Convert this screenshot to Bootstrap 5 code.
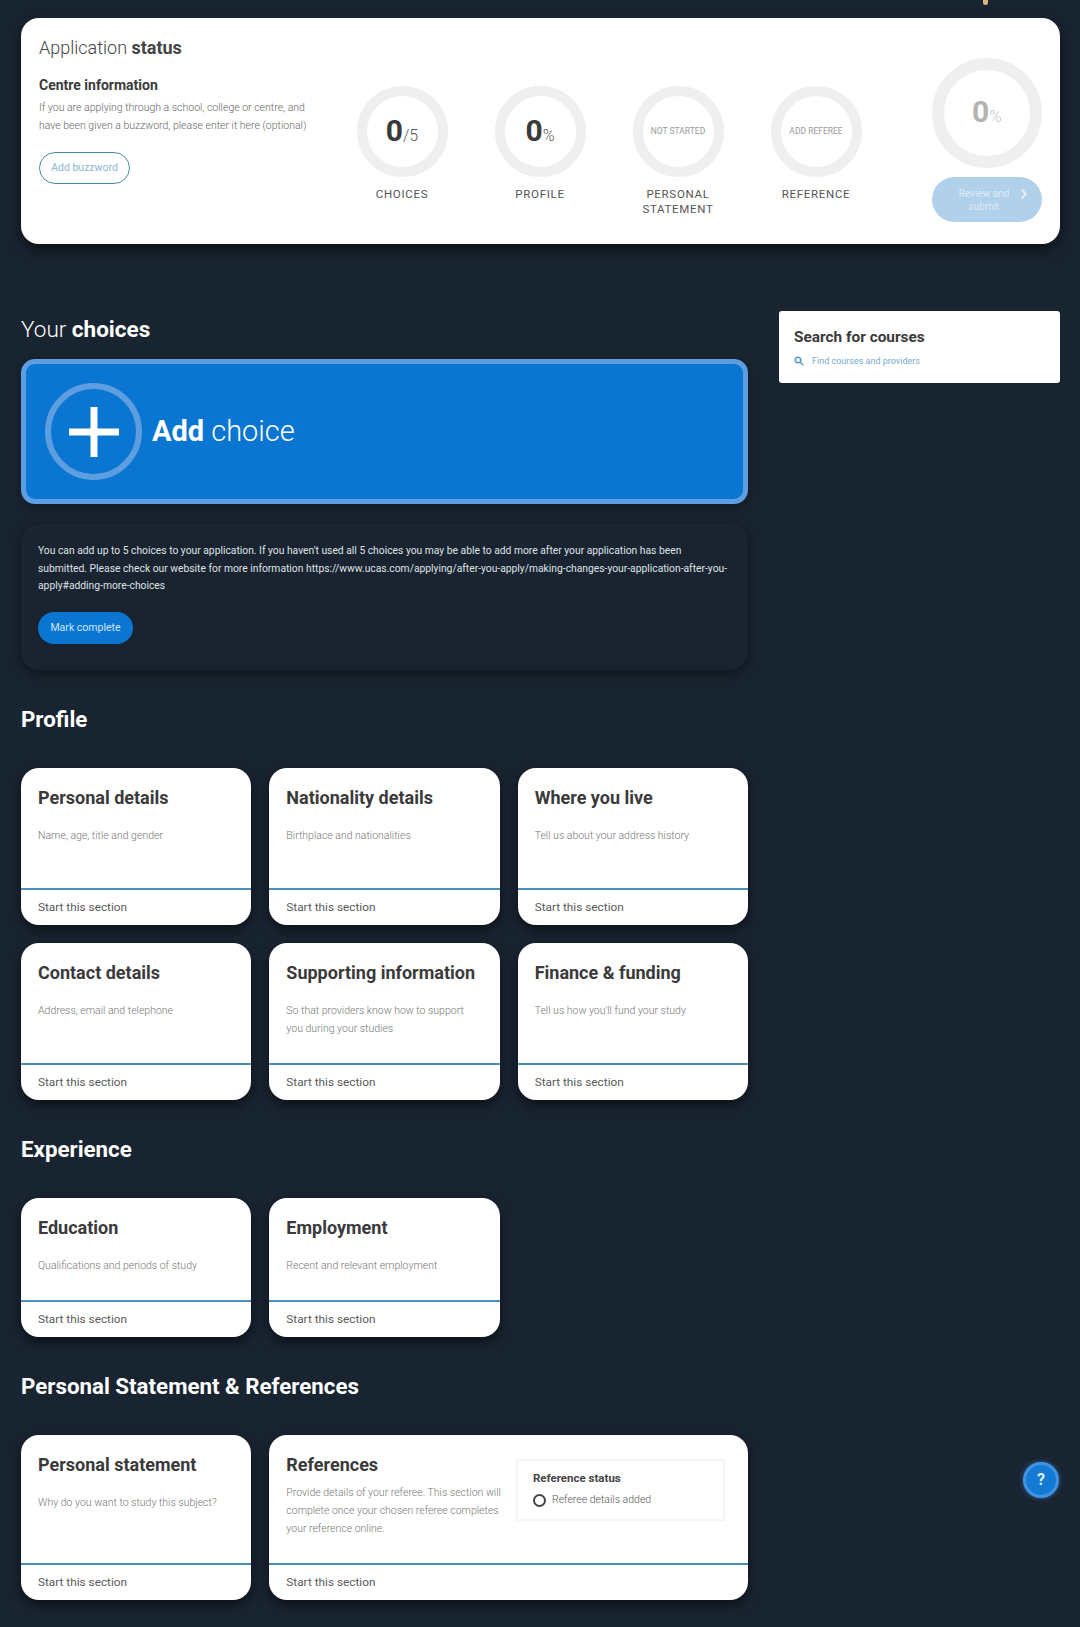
<!DOCTYPE html>
<html lang="en">

<head>
    <meta charset="UTF-8">
    <meta name="viewport" content="width=device-width, initial-scale=1.0">
    <title>Your application</title>
    <link href="https://cdn.jsdelivr.net/npm/bootstrap@5.3.3/dist/css/bootstrap.min.css" rel="stylesheet">
    <style>
        body { background: #192431; font-family: Roboto, "Liberation Sans", sans-serif; color: #333; }
        .app-page { padding: 18px 20px 27px 21px; position: relative; height: 1627px; overflow: hidden; }
        .top-spark { position: absolute; top: 0; left: 983px; width: 5px; height: 5px; background: #d9b77a; border-radius: 0 0 3px 3px; }

        .status-panel { background: #fff; border-radius: 18px; height: 226px; box-shadow: 0 6px 14px rgba(0, 0, 0, .55); padding: 0 18px 0 18px; }
        .status-left { width: 294px; padding-top: 19px; }
        .status-title { font-size: 18px; font-weight: 300; line-height: 22px; color: #444; margin: 0 0 17px; }
        .status-title b, .page-title b { font-weight: 700; }
        .centre-title { font-size: 14px; font-weight: 700; line-height: 18px; color: #3a3a3a; margin: 0 0 5px; }
        .centre-text { font-size: 10.5px; font-weight: 300; line-height: 18px; color: #666; margin: 0 0 17px; white-space: nowrap; }
        .buzz-btn { font-size: 10.5px; color: #8bb8cf; border: 1.5px solid #4a8aa0; border-radius: 17px; width: 91px; height: 32px; padding: 0; background: #fff; }

        .step-list { padding-top: 68px; }
        .step-item { width: 138px; text-align: center; }
        .ring { width: 91px; height: 91px; border: 10px solid #efefef; border-radius: 50%; margin: 0 auto 10px; color: #3a3a3a; }
        .ring-big { font-size: 30px; font-weight: 700; line-height: 1; }
        .ring-unit { font-size: 16px; font-weight: 300; color: #555; }
        .ring-word { font-size: 8.5px; color: #999; white-space: nowrap; }
        .step-label { font-size: 11.5px; letter-spacing: .7px; line-height: 15px; color: #555; }
        .submit-col { width: 110px; margin-left: auto; padding-top: 40px; }
        .ring-large { width: 110px; height: 110px; border-width: 12px; margin-bottom: 9px; color: #b3b3b3; }
        .ring-large .ring-unit { color: #c5c5c5; font-size: 17px; }
        .submit-btn { width: 110px; height: 45px; border-radius: 23px; background: #b1d0ea; color: #dcecf8; font-size: 10px; line-height: 13px; border: 0; padding: 0 22px 0 16px; position: relative; }
        .submit-btn svg { position: absolute; right: 14px; top: 11px; }

        .page-columns { margin-top: 67px; gap: 31px; }
        .main-col { width: 727px; padding-top: 5px; }
        .side-col { width: 281px; }
        .page-title { font-size: 22.5px; font-weight: 300; line-height: 26px; color: #fff; margin: 0 0 17px; }
        .add-choice { height: 145px; background: #0a76d2; border: 5px solid #5d9ee0; border-radius: 14px; padding-left: 19px; color: #fff; box-shadow: 0 3px 8px rgba(0, 0, 0, .3); }
        .add-ring { width: 97px; height: 97px; border: 6px solid #5d9ee0; border-radius: 50%; margin-right: 10px; }
        .add-text { font-size: 29px; font-weight: 300; }
        .add-text b { font-weight: 700; }
        .info-panel { background: #1a2431; border-radius: 18px; height: 146px; margin-top: 20px; padding: 18px 17px 0; box-shadow: 0 3px 12px rgba(0, 0, 0, .5); color: #dfe3e6; font-size: 10.3px; line-height: 17.6px; }
        .info-panel p { margin: 0 0 17px; }
        .mark-btn { background: #0a76d2; color: #cfe6fa; border: 0; border-radius: 16px; width: 95px; height: 32px; padding: 0; font-size: 10.5px; }
        .group-title { font-size: 22.3px; font-weight: 700; line-height: 26px; color: #fff; margin: 36px 0 36px; }
        .section-grid { --bs-gutter-x: 18px; --bs-gutter-y: 18px; }

        .section-tile { background: #fff; border: 0; border-radius: 18px; box-shadow: 0 5px 12px rgba(0, 0, 0, .55); overflow: hidden; }
        .tile-body { padding: 18px 17px 0; }
        .tile-h-120 { height: 120px; }
        .tile-h-102 { height: 102px; }
        .tile-h-128 { height: 128px; }
        .tile-title { font-size: 18px; font-weight: 700; line-height: 24px; color: #3a3a3a; margin: 0 0 17px; }
        .tile-title-tight { margin-bottom: 7px; }
        .tile-text { font-size: 10.5px; font-weight: 300; line-height: 18px; color: #777; margin: 0; }
        .tile-foot { border-top: 2px solid #4b8fb8; height: 37px; padding: 0 17px; line-height: 35px; font-size: 11.8px; color: #5a5a5a; }
        .ref-status { width: 209px; height: 62px; margin-top: 6px; margin-right: 6px; border: 2px solid #f5f5f5; padding: 10px 15px; flex-shrink: 0; }
        .ref-status h6 { font-size: 11.5px; font-weight: 700; line-height: 15px; color: #444; margin: 0 0 6px; }
        .ref-line { font-size: 10.5px; font-weight: 300; color: #555; line-height: 16px; }
        .ref-dot { width: 13px; height: 13px; border: 2px solid #444; border-radius: 50%; margin-right: 6px; }
        .ref-copy { width: 215px; flex-shrink: 0; }

        .search-panel { background: #fff; border-radius: 3px; height: 72px; padding: 16px 15px; }
        .search-panel h5 { font-size: 15.4px; font-weight: 700; line-height: 20px; color: #3a3a3a; margin: 0 0 7px; }
        .search-link { font-size: 9px; color: #7aa9cc; line-height: 14px; }
        .help-btn { position: absolute; left: 1023px; top: 1462px; width: 36px; height: 36px; border-radius: 50%; background: #1479d2; border: 3px solid #3f93e2; color: #dbeefc; font-size: 16px; font-weight: 700; box-shadow: 0 0 5px rgba(60, 150, 230, .6); }
    </style>
</head>

<body>
    <div class="app-page">
        <div class="top-spark"></div>

        <section class="status-panel d-flex">
            <div class="status-left">
                <h2 class="status-title">Application <b>status</b></h2>
                <h3 class="centre-title">Centre information</h3>
                <p class="centre-text">If you are applying through a school, college or centre, and<br>have been given a buzzword, please enter it here (optional)</p>
                <button class="buzz-btn" type="button">Add buzzword</button>
            </div>
            <div class="step-list d-flex">
                <div class="step-item">
                    <div class="ring d-flex align-items-center justify-content-center"><span><span class="ring-big">0</span><span class="ring-unit">/5</span></span></div>
                    <div class="step-label">CHOICES</div>
                </div>
                <div class="step-item">
                    <div class="ring d-flex align-items-center justify-content-center"><span><span class="ring-big">0</span><span class="ring-unit">%</span></span></div>
                    <div class="step-label">PROFILE</div>
                </div>
                <div class="step-item">
                    <div class="ring d-flex align-items-center justify-content-center"><span class="ring-word">NOT STARTED</span></div>
                    <div class="step-label">PERSONAL<br>STATEMENT</div>
                </div>
                <div class="step-item">
                    <div class="ring d-flex align-items-center justify-content-center"><span class="ring-word">ADD REFEREE</span></div>
                    <div class="step-label">REFERENCE</div>
                </div>
            </div>
            <div class="submit-col">
                <div class="ring ring-large d-flex align-items-center justify-content-center"><span><span class="ring-big">0</span><span class="ring-unit">%</span></span></div>
                <button class="submit-btn" type="button">Review and submit
                    <svg width="8" height="12" viewBox="0 0 8 12" fill="none" stroke="#e4f0fa" stroke-width="2"><path d="M1.5 1.5 6 6l-4.500 4.500"/></svg>
                </button>
            </div>
        </section>

        <div class="page-columns d-flex">
            <main class="main-col">
                <h2 class="page-title">Your <b>choices</b></h2>
                <div class="add-choice d-flex align-items-center">
                    <div class="add-ring d-flex align-items-center justify-content-center">
                        <svg width="50" height="50" viewBox="0 0 50 50" fill="#fff"><rect x="21.500" y="0" width="7" height="50"/><rect x="0" y="21.500" width="50" height="7"/></svg>
                    </div>
                    <div class="add-text"><b>Add</b> choice</div>
                </div>
                <div class="info-panel">
                    <p>You can add up to 5 choices to your application. If you haven't used all 5 choices you may be able to add more after your application has been submitted. Please check our website for more information https://www.ucas.com/applying/after-you-apply/making-changes-your-application-after-you-apply#adding-more-choices</p>
                    <button class="mark-btn" type="button">Mark complete</button>
                </div>

                <h2 class="group-title">Profile</h2>
                <div class="row section-grid">
                    <div class="col-4"><div class="section-tile"><div class="tile-body tile-h-120"><h3 class="tile-title">Personal details</h3><p class="tile-text">Name, age, title and gender</p></div><div class="tile-foot">Start this section</div></div></div>
                    <div class="col-4"><div class="section-tile"><div class="tile-body tile-h-120"><h3 class="tile-title">Nationality details</h3><p class="tile-text">Birthplace and nationalities</p></div><div class="tile-foot">Start this section</div></div></div>
                    <div class="col-4"><div class="section-tile"><div class="tile-body tile-h-120"><h3 class="tile-title">Where you live</h3><p class="tile-text">Tell us about your address history</p></div><div class="tile-foot">Start this section</div></div></div>
                    <div class="col-4"><div class="section-tile"><div class="tile-body tile-h-120"><h3 class="tile-title">Contact details</h3><p class="tile-text">Address, email and telephone</p></div><div class="tile-foot">Start this section</div></div></div>
                    <div class="col-4"><div class="section-tile"><div class="tile-body tile-h-120"><h3 class="tile-title">Supporting information</h3><p class="tile-text">So that providers know how to support you during your studies</p></div><div class="tile-foot">Start this section</div></div></div>
                    <div class="col-4"><div class="section-tile"><div class="tile-body tile-h-120"><h3 class="tile-title">Finance &amp; funding</h3><p class="tile-text">Tell us how you'll fund your study</p></div><div class="tile-foot">Start this section</div></div></div>
                </div>

                <h2 class="group-title">Experience</h2>
                <div class="row section-grid">
                    <div class="col-4"><div class="section-tile"><div class="tile-body tile-h-102"><h3 class="tile-title">Education</h3><p class="tile-text">Qualifications and periods of study</p></div><div class="tile-foot">Start this section</div></div></div>
                    <div class="col-4"><div class="section-tile"><div class="tile-body tile-h-102"><h3 class="tile-title">Employment</h3><p class="tile-text">Recent and relevant employment</p></div><div class="tile-foot">Start this section</div></div></div>
                </div>

                <h2 class="group-title">Personal Statement &amp; References</h2>
                <div class="row section-grid">
                    <div class="col-4"><div class="section-tile"><div class="tile-body tile-h-128"><h3 class="tile-title">Personal statement</h3><p class="tile-text">Why do you want to study this subject?</p></div><div class="tile-foot">Start this section</div></div></div>
                    <div class="col-8"><div class="section-tile"><div class="tile-body tile-h-128 d-flex justify-content-between">
                        <div class="ref-copy"><h3 class="tile-title tile-title-tight">References</h3><p class="tile-text">Provide details of your referee. This section will complete once your chosen referee completes your reference online.</p></div>
                        <div class="ref-status"><h6>Reference status</h6><div class="ref-line d-flex align-items-center"><span class="ref-dot"></span>Referee details added</div></div>
                    </div><div class="tile-foot">Start this section</div></div></div>
                </div>
            </main>
            <aside class="side-col">
                <div class="search-panel">
                    <h5>Search for courses</h5>
                    <div class="search-link d-flex align-items-center gap-2">
                        <svg width="10" height="10" viewBox="0 0 10 10" fill="none" stroke="#5a9bc8" stroke-width="1.500"><circle cx="4" cy="4" r="2.800"/><path d="M6.200 6.200 9.300 9.300"/></svg>
                        Find courses and providers
                    </div>
                </div>
            </aside>
        </div>

        <button class="help-btn d-flex align-items-center justify-content-center p-0" type="button">?</button>
    </div>

    <script src="https://cdn.jsdelivr.net/npm/bootstrap@5.3.3/dist/js/bootstrap.bundle.min.js"></script>
</body>

</html>
